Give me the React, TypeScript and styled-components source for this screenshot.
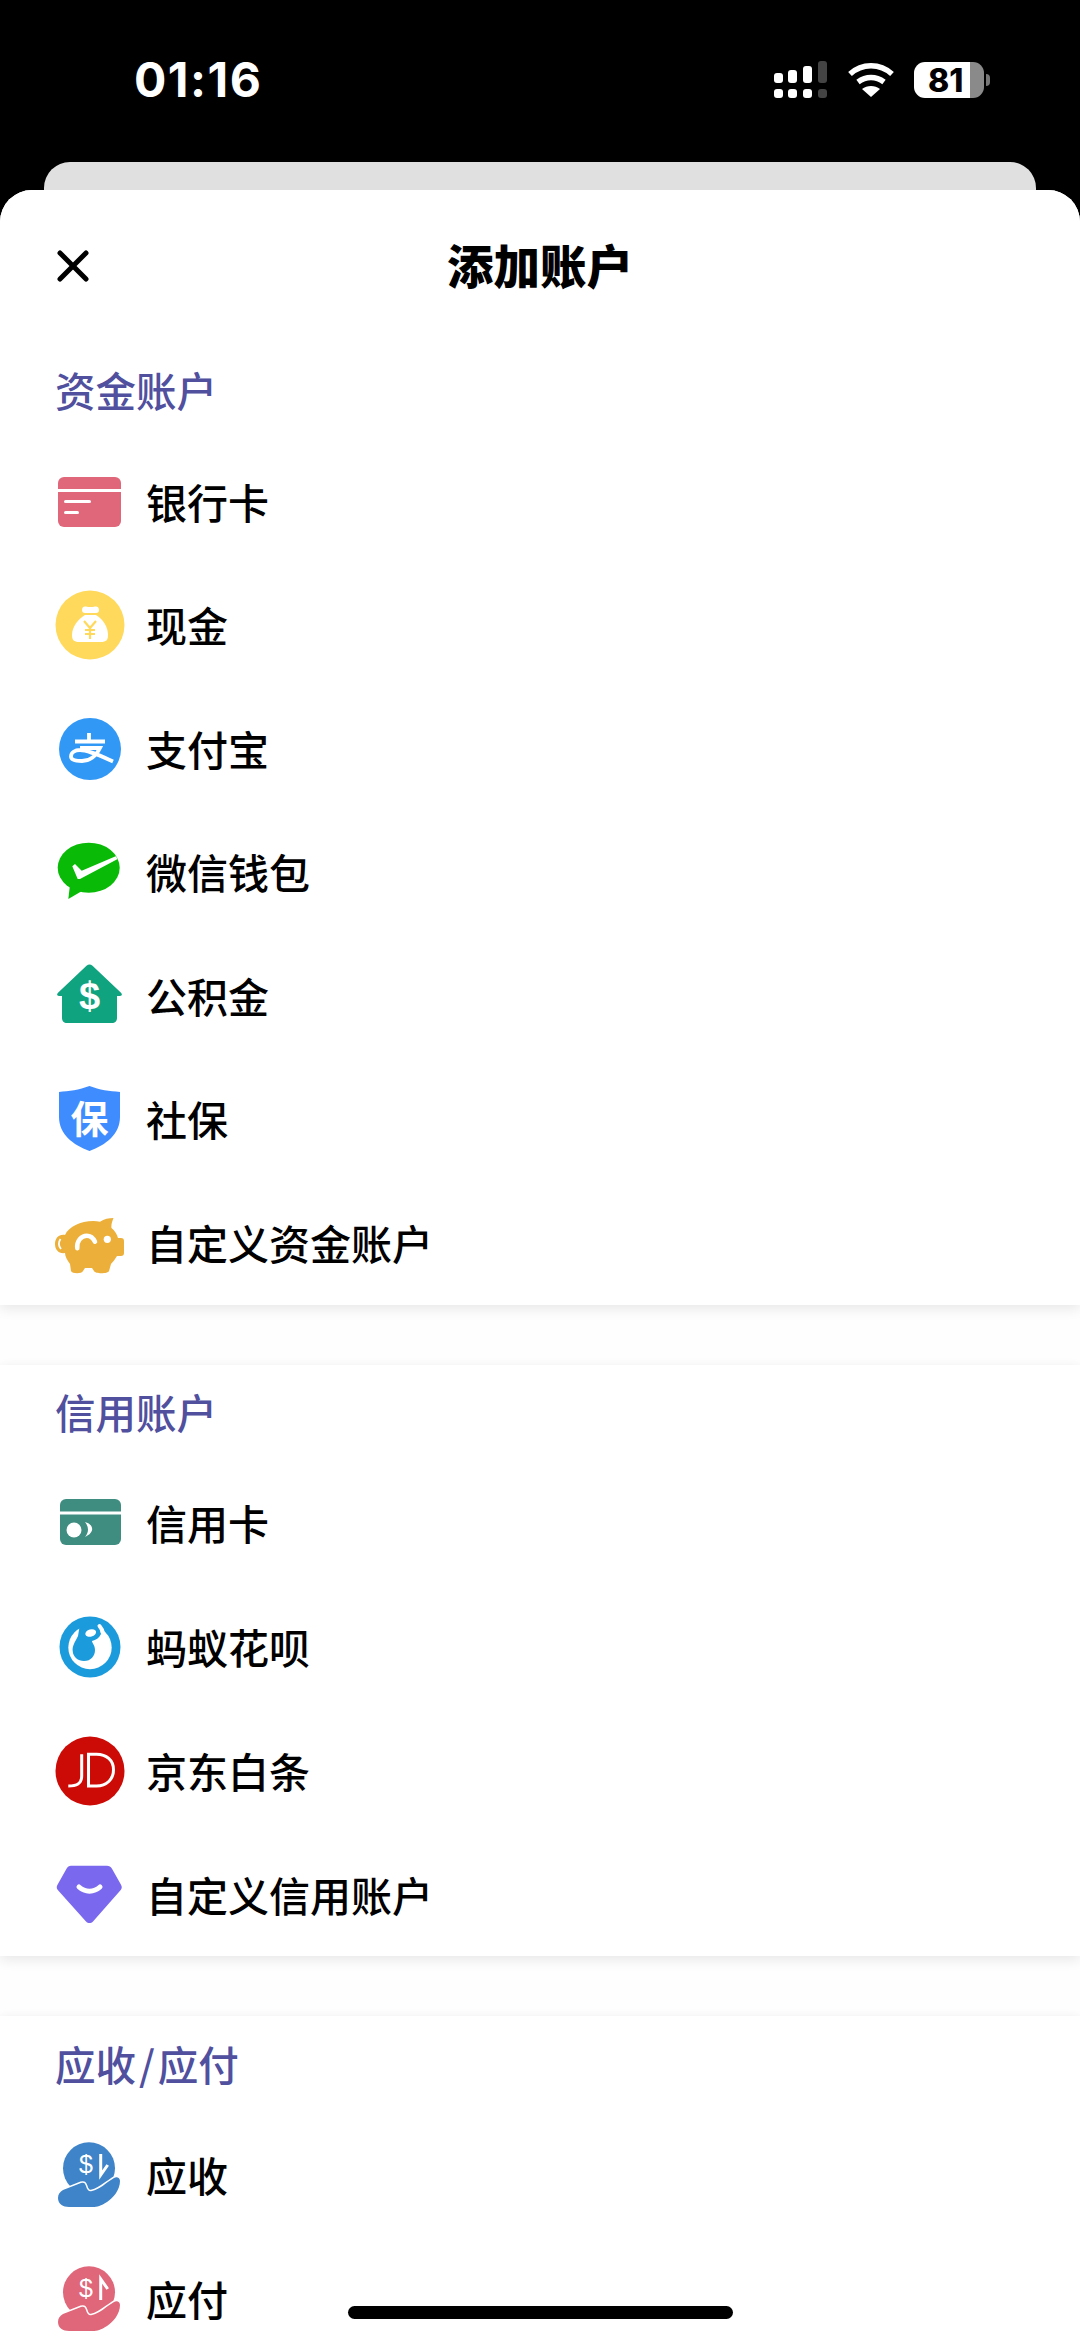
import React from 'react';
import styled, { createGlobalStyle } from 'styled-components';

const GlobalStyle = createGlobalStyle`
  html, body {
    margin: 0;
    padding: 0;
    background: #000;
  }
  * {
    box-sizing: border-box;
  }
`;

const Page = styled.div`
  position: relative;
  width: 1080px;
  height: 2341px;
  overflow: hidden;
  background: #000;
  font-family: "Noto Sans CJK SC", "Noto Sans", sans-serif;
`;

const StatusBar = styled.div`
  height: 162px;
  padding: 50px 90px 0 134px;
  display: flex;
  align-items: flex-start;
  justify-content: space-between;
`;

const Time = styled.div`
  font-family: Inter, "Liberation Sans", sans-serif;
  font-weight: 700;
  font-size: 48px;
  line-height: 60px;
  letter-spacing: 1.5px;
  color: #fff;
`;

const StatusIcons = styled.div`
  display: flex;
  align-items: center;
  gap: 20px;
  height: 60px;
`;

const BatteryBody = styled.div`
  width: 70px;
  height: 36px;
  border-radius: 11px;
  overflow: hidden;
  background: linear-gradient(90deg, #fff 0 80%, #8a8a8a 80% 100%);
  display: flex;
  align-items: center;
  padding-left: 14px;
  font-family: Inter, "Liberation Sans", sans-serif;
  font-weight: 800;
  font-size: 32px;
  color: #000;
`;

const Battery = styled.div`
  display: flex;
  align-items: center;
  gap: 2px;

  &::after {
    content: '';
    width: 4px;
    height: 12px;
    border-radius: 0 4px 4px 0;
    background: #777;
  }
`;

const BackCard = styled.div`
  height: 28px;
  margin: 0 44px;
  background: #e0e0e0;
  border-radius: 26px 26px 0 0;
`;

const Sheet = styled.div`
  height: 2151px;
  background: #fefefe;
  border-radius: 32px 32px 0 0;
  overflow: hidden;
`;

const Header = styled.div`
  height: 150px;
  padding: 0 55px 2px;
  display: flex;
  align-items: center;
  justify-content: center;
  position: relative;
  background: #fff;
`;

const CloseButton = styled.div`
  position: absolute;
  left: 57px;
  top: 60px;
  width: 32px;
  height: 32px;
  display: flex;
`;

const Title = styled.h1`
  margin: 0;
  font-size: 46.5px;
  font-weight: 900;
  line-height: 60px;
  color: #000;
`;

const Section = styled.section<{ $first?: boolean }>`
  background: #fff;
  margin-bottom: 60px;
  box-shadow: ${p => (p.$first ? '0 4px 12px rgba(0, 0, 0, 0.09)' : '0 4px 12px rgba(0, 0, 0, 0.09), 0 -3px 8px rgba(0, 0, 0, 0.012)')};
`;

const SectionTitle = styled.h2<{ $height: number }>`
  margin: 0;
  height: ${p => p.$height}px;
  padding: 0 0 2px 55px;
  display: flex;
  align-items: center;
  font-size: 40.5px;
  font-weight: 500;
  color: #50509f;
`;

const Slash = styled.span`
  margin: 0 3px;
`;

const Row = styled.div<{ $height: number; $nudge: number }>`
  height: ${p => p.$height}px;
  padding: 0 0 ${p => p.$nudge}px 55px;
  display: flex;
  align-items: center;
  gap: 21px;
`;

const IconSlot = styled.div`
  width: 70px;
  height: 70px;
  flex: none;
  display: flex;
  align-items: center;
  justify-content: center;
  margin-bottom: -2px;
`;

const RowLabel = styled.span`
  font-size: 41px;
  font-weight: 500;
  line-height: 60px;
  color: #000;
`;

const HomeIndicator = styled.div`
  position: absolute;
  left: 348px;
  bottom: 22px;
  width: 385px;
  height: 13px;
  border-radius: 7px;
  background: #000;
`;

const IconText = styled.text`
  font-family: "Noto Sans CJK SC", "Liberation Sans", sans-serif;
  fill: #fff;
`;

const Svg: React.FC<{ children: React.ReactNode }> = ({ children }) => (
  <svg width="70" height="70" viewBox="0 0 70 70">{children}</svg>
);

const BankCardIcon = () => (
  <Svg>
    <rect x="3" y="10" width="63" height="50" rx="6" fill="#e0667a" />
    <rect x="3" y="22" width="63" height="3" fill="#fff" />
    <rect x="9" y="33" width="27" height="3" rx="1.5" fill="#fff" />
    <rect x="9" y="44" width="15" height="3" rx="1.5" fill="#fff" />
  </Svg>
);

const CashIcon = () => (
  <Svg>
    <circle cx="35" cy="35" r="34.5" fill="#ffd95c" />
    <path d="M27 20c0-3 2-4 4-3.500 3 .8 6 .8 9 0 2-.5 4 .5 4 3.500 0 2-1 3-3 3H30c-2 0-3-1-3-3z" fill="#fff" />
    <path d="M30 25h11c7 4 12 12 12 20 0 5-2 7-7 7H24c-5 0-7-2-7-7 0-8 6-16 13-20z" fill="#fff" />
    <path d="M29 31l6 7 6-7M35 38v11M30 40h10M30 44h10" stroke="#ffd95c" strokeWidth="2.200" fill="none" />
  </Svg>
);

const AlipayIcon = () => (
  <Svg>
    <circle cx="35" cy="35" r="31" fill="#3298f5" />
    <path
      d="M20 27.500h30M34 19v9M25 34h20C41 42 35 47 27 47c-6 0-11-1-11-4.500 0-4 4-6.500 9-6.500 9 0 23 7 33 11.500"
      stroke="#fff"
      strokeWidth="3.800"
      fill="none"
    />
  </Svg>
);

const WechatIcon = () => (
  <Svg>
    <ellipse cx="33.7" cy="30.7" rx="31" ry="25" fill="#09bb07" />
    <path d="M15 48l-1.700 14L27 54z" fill="#09bb07" />
    <path d="M17.300 29.300L22.700 42h2.300L62.700 22l-2-2.700-34 14.400L20 27z" fill="#fff" />
  </Svg>
);

const HousingFundIcon = () => (
  <Svg>
    <path d="M34.500 3.500c1 0 2 .5 3 1.300l28.500 27c1.500 1.500 1 3.200-1 3.200h-3v22c0 3-2 5-5 5H12c-3 0-5-2-5-5V35H4c-2 0-2.500-1.700-1-3.200l28.500-27c1-.8 2-1.300 3-1.300z" fill="#10a37f" />
    <text x="34.500" y="48" textAnchor="middle" fontSize="38" fontWeight="700" fontFamily="Liberation Sans" fill="#fff">$</text>
  </Svg>
);

const ShieldIcon = () => (
  <Svg>
    <path d="M34.500 2c10 4 20 5 30.500 6v25c0 17-14 28-30.500 34C18 61 4 50 4 33V8c10-1 20-2 30.500-6z" fill="#3f8cff" />
    <IconText x="34.500" y="49" textAnchor="middle" fontSize="38" fontWeight="700">保</IconText>
  </Svg>
);

const PigIcon = () => (
  <Svg>
    <path d="M45 13.700C49 11 54 10 58.500 10 57 14 56 17 56.500 20 60 23 62 26 63 30h3c2 0 3 1 3 3v12c0 2-1 3-3 3h-4c-2 3-4 6-6 8l-2 7c-1 3-14 3-15 0l-2-3h-7l-2 3c-1 3-11 3-12 0l-1-7c-3-4-5-8-5-11-6 1-10-3-10-9s4-10 10-9c4-9 20-16 35-13.300z" fill="#ecb03a" />
    <path d="M5.500 31c-2 3-2 7 .5 10" stroke="#fff" strokeWidth="1.800" fill="none" />
    <circle cx="52.300" cy="31.300" r="3.600" fill="#fff" />
    <path d="M22.300 40.300c-1-7 4-12.600 9.400-12.600 3.600 0 6.600 2.300 8.300 6" stroke="#fff" strokeWidth="4.500" fill="none" strokeLinecap="round" />
  </Svg>
);

const CreditCardIcon = () => (
  <Svg>
    <rect x="5" y="11" width="61" height="46" rx="6" fill="#3f8d80" />
    <rect x="5" y="23.500" width="61" height="3" fill="#fff" />
    <circle cx="19" cy="42" r="7.500" fill="#fff" />
    <path d="M30 34c8 2 11 10 0 15 4-5 4-10 0-15z" fill="#fff" />
  </Svg>
);

const HuabeiIcon = () => (
  <Svg>
    <circle cx="35" cy="35" r="30.500" fill="#1c9bdc" />
    <circle cx="35" cy="35.500" r="21.700" fill="#fff" />
    <path d="M25 12l-2 12c-3 6-6 10-5.300 15C18 45 23 49 29 49c7 0 11-5 11-11 0-5-3-7-3-9 4-1 7-3 9-7l-2-10z" fill="#1c9bdc" />
    <ellipse cx="35.700" cy="21" rx="5.500" ry="3.500" transform="rotate(-15 35.700 21)" fill="#fff" />
    <path d="M47 30c2-6 1-12-2.500-16" stroke="#fff" strokeWidth="4" fill="none" strokeLinecap="round" />
  </Svg>
);

const JdIcon = () => (
  <Svg>
    <circle cx="35" cy="35" r="34.500" fill="#cc0a06" />
    <path d="M26.700 18.300V40c0 7-4 10-13.400 10" stroke="#fff" strokeWidth="3" fill="none" />
    <path d="M33.500 18.300h8c10 0 17 6 17 15.500s-7 16.200-17 16.200h-8z" stroke="#fff" strokeWidth="3" fill="none" />
  </Svg>
);

const DiamondIcon = () => (
  <Svg>
    <path d="M16 5.700h36c2 0 4 1 5 3l9 16c1.200 2 1 4-.5 5.500L38 61.500c-2 2-5 2-7 0L3 30.200C1.500 28.700 1.300 26.700 2.500 24.700l9-16c1-2 2.500-3 4.500-3z" fill="#7a69ee" />
    <path d="M24 27c6 5.500 15 5.500 21 0" stroke="#fff" strokeWidth="5" fill="none" strokeLinecap="round" />
  </Svg>
);

const HandCoinIcon: React.FC<{ color: string; up?: boolean }> = ({ color, up }) => (
  <Svg>
    <circle cx="34" cy="28.300" r="26" fill={color} />
    <path
      d="M3 58c0-4 2-6 5-8l18-7c3-1 4 0 5 3 1 4 3 6 6 5 7-1 15-9 22-13 3-2 6 0 6 3 0 9-7 17-13 21-6 4-10 5-14 5H14C8 67 3 64 3 58z"
      fill={color}
      stroke="#fff"
      strokeWidth="3"
      paintOrder="stroke"
    />
    <text x="31" y="33" textAnchor="middle" fontSize="25" fontWeight="400" fontFamily="Liberation Sans" fill="#fff">$</text>
    <path d={up ? 'M45.700 36V15l7 10' : 'M45.700 14v21l7-10'} stroke="#fff" strokeWidth="3" fill="none" />
  </Svg>
);

const fundRows = [
  { label: '银行卡', icon: <BankCardIcon /> },
  { label: '现金', icon: <CashIcon /> },
  { label: '支付宝', icon: <AlipayIcon /> },
  { label: '微信钱包', icon: <WechatIcon /> },
  { label: '公积金', icon: <HousingFundIcon /> },
  { label: '社保', icon: <ShieldIcon /> },
  { label: '自定义资金账户', icon: <PigIcon /> },
];

const creditRows = [
  { label: '信用卡', icon: <CreditCardIcon /> },
  { label: '蚂蚁花呗', icon: <HuabeiIcon /> },
  { label: '京东白条', icon: <JdIcon /> },
  { label: '自定义信用账户', icon: <DiamondIcon /> },
];

const debtRows = [
  { label: '应收', icon: <HandCoinIcon color="#3f84c8" /> },
  { label: '应付', icon: <HandCoinIcon color="#e0667a" up /> },
];

const renderRows = (rows: { label: string; icon: React.ReactNode }[], height: number, nudge: number) =>
  rows.map(row => (
    <Row key={row.label} $height={height} $nudge={nudge}>
      <IconSlot>{row.icon}</IconSlot>
      <RowLabel>{row.label}</RowLabel>
    </Row>
  ));

const App = () => (
  <Page>
    <GlobalStyle />
    <StatusBar>
      <Time>01:16</Time>
      <StatusIcons>
        <svg width="54" height="40" viewBox="0 0 54 40">
          <rect x="0" y="13" width="9" height="10" rx="3" fill="#fff" />
          <rect x="14" y="10" width="9" height="13" rx="3" fill="#fff" />
          <rect x="29" y="6" width="9" height="17" rx="3" fill="#fff" />
          <rect x="44" y="1" width="9" height="22" rx="3" fill="#444" />
          <rect x="0" y="29" width="9" height="9" rx="3" fill="#fff" />
          <rect x="14" y="29" width="9" height="9" rx="3" fill="#fff" />
          <rect x="29" y="29" width="9" height="9" rx="3" fill="#fff" />
          <rect x="44" y="29" width="9" height="9" rx="3" fill="#444" />
        </svg>
        <svg width="46" height="36" viewBox="0 0 46 36">
          <path d="M2 12c12-11 30-11 42 0" stroke="#fff" strokeWidth="5.500" fill="none" />
          <path d="M10 20c8-6 18-6 26 0" stroke="#fff" strokeWidth="5.500" fill="none" />
          <path d="M14 27c5-4 13-4 18 0l-9 8z" fill="#fff" />
        </svg>
        <Battery>
          <BatteryBody>81</BatteryBody>
        </Battery>
      </StatusIcons>
    </StatusBar>
    <BackCard />
    <Sheet>
      <Header>
        <CloseButton>
          <svg width="32" height="32" viewBox="0 0 32 32">
            <path d="M3 3l26 26M29 3L3 29" stroke="#000" strokeWidth="5" strokeLinecap="round" />
          </svg>
        </CloseButton>
        <Title>添加账户</Title>
      </Header>
      <Section $first>
        <SectionTitle $height={100}>资金账户</SectionTitle>
        {renderRows(fundRows, 123.5, 2)}
      </Section>
      <Section>
        <SectionTitle $height={96}>信用账户</SectionTitle>
        {renderRows(creditRows, 123.75, 0)}
      </Section>
      <Section>
        <SectionTitle $height={97}>应收<Slash>/</Slash>应付</SectionTitle>
        {renderRows(debtRows, 123.5, 0)}
      </Section>
    </Sheet>
    <HomeIndicator />
  </Page>
);

export default App;
